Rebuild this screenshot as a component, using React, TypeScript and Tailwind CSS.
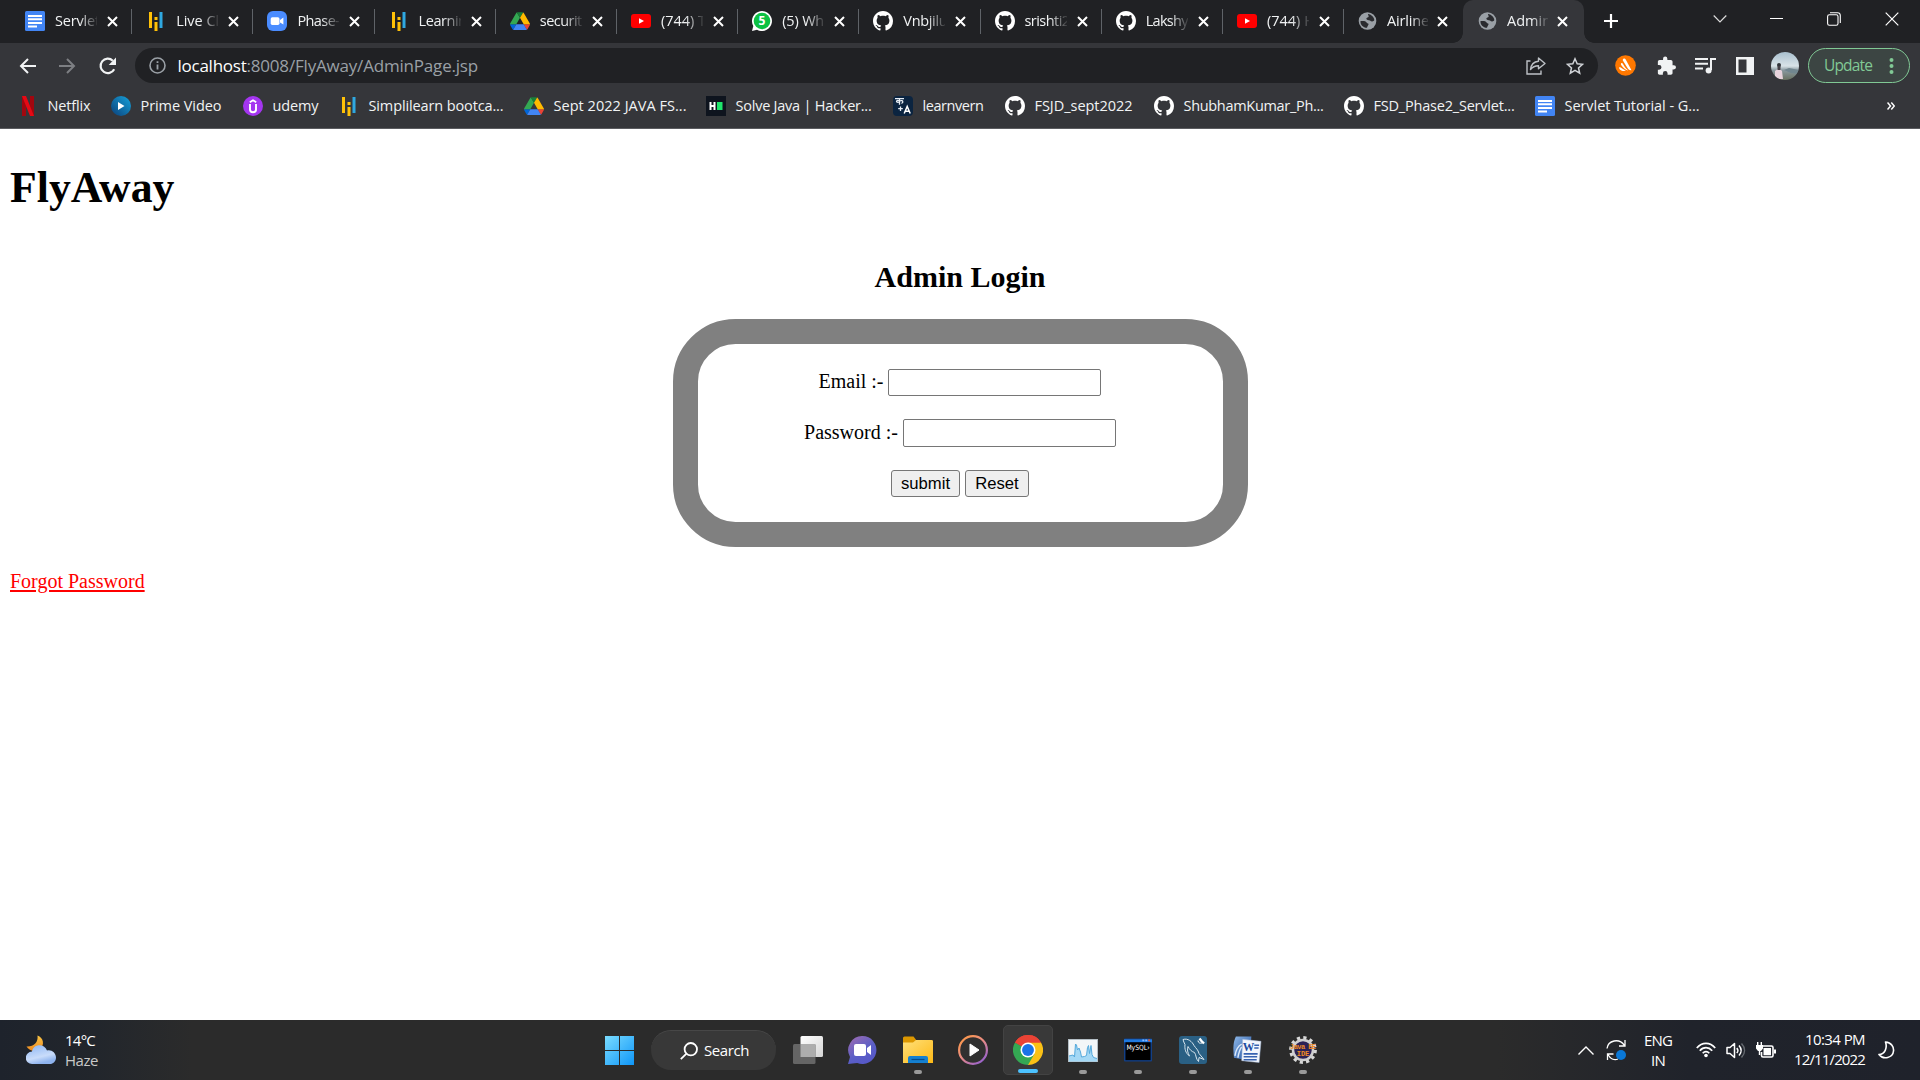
import React, { useLayoutEffect, useRef, useState } from "react";

const ui = "font-['Open_Sans','Noto_Sans',sans-serif]";

/* Text tracked so that it fills the given width. */
function Fit({ text, w, className = "" }: { text: string; w: number; className?: string }) {
  const ref = useRef<HTMLSpanElement>(null);
  const [ls, setLs] = useState(0);
  useLayoutEffect(() => {
    const el = ref.current;
    if (!el) return;
    const natural = el.getBoundingClientRect().width - ls * text.length;
    setLs((w - natural) / text.length);
  }, [text, w]);
  return (
    <span className="inline-block overflow-visible whitespace-nowrap" style={{ width: w }}>
      <span ref={ref} className={`inline-block ${className}`} style={{ letterSpacing: ls }}>{text}</span>
    </span>
  );
}

const Docs = () => (
  <svg width="20" height="20" viewBox="0 0 20 20"><rect width="20" height="20" rx="1.5" fill="#4285f4" /><path d="M3 4h14v2H3zM3 7.3h14v2H3zM3 11h14v2H3zM3 14.5h9v2H3z" fill="#fff" /></svg>
);
const Simpli = () => (
  <svg width="20" height="20" viewBox="0 0 20 20"><path d="M3 1h3v16H3zM8.500 11h3v9h-3zM8.500 6h3v3h-3z" fill="#ffc107" /><path d="M13.500 1h3v16h-3z" fill="#2fa8e0" /></svg>
);
const Zoom = () => (
  <svg width="20" height="20" viewBox="0 0 20 20"><rect width="20" height="20" rx="6" fill="#4a8cff" /><rect x="3.7" y="6.3" width="8.8" height="7.6" rx="1.6" fill="#fff" /><path d="M13 9l3.4-2.4v7L13 11.400z" fill="#fff" /></svg>
);
const Drive = () => (
  <svg width="20" height="20" viewBox="0 0 87.300 87.300"><g transform="translate(0 5)"><path d="M6.600 66.850l3.850 6.650c.8 1.400 1.950 2.500 3.300 3.300L27.500 53H0c0 1.550.4 3.100 1.200 4.500z" fill="#0066da" /><path d="M43.650 25L29.900 1.200c-1.350.8-2.500 1.900-3.300 3.300L1.200 48.500A9 9 0 0 0 0 53h27.500z" fill="#34a853" /><path d="M73.550 76.800c1.350-.8 2.500-1.900 3.300-3.300l9.250-16c.8-1.400 1.200-2.950 1.200-4.500H59.800l5.850 11.500z" fill="#ea4335" /><path d="M43.650 25L57.400 1.200C56.050.4 54.500 0 52.900 0H34.400c-1.600 0-3.150.45-4.500 1.200z" fill="#188038" /><path d="M59.800 53H27.500L13.750 76.800c1.350.8 2.900 1.200 4.500 1.200h50.800c1.600 0 3.150-.45 4.500-1.200z" fill="#4285f4" /><path d="M73.400 26.500L60.700 4.500c-.8-1.400-1.950-2.500-3.300-3.300L43.650 25 59.800 53h27.450c0-1.550-.4-3.100-1.200-4.500z" fill="#ffba00" /></g></svg>
);
const YouTube = () => (
  <svg width="20" height="20" viewBox="0 0 20 20"><rect y="3" width="20" height="14" rx="3" fill="#f00" /><path d="M8 7.200v5.600l5-2.800z" fill="#fff" /></svg>
);
const WhatsApp = () => (
  <svg width="20" height="20" viewBox="0 0 20 20"><path d="M0 20l1.300-5A10 10 0 1 1 5 18.700z" fill="#fff" /><circle cx="10" cy="10" r="8.300" fill="#0cc143" /><text x="10" y="14.300" fontSize="12" fontWeight="700" textAnchor="middle" fill="#fff" fontFamily="Open Sans">5</text></svg>
);
const GitHub = () => (
  <svg width="20" height="20" viewBox="0 0 16 16" fill="#fff"><path d="M8 0C3.580 0 0 3.580 0 8c0 3.540 2.290 6.530 5.470 7.590.4.070.55-.17.55-.38 0-.19-.01-.82-.01-1.490-2.010.37-2.530-.49-2.690-.94-.09-.23-.48-.94-.82-1.130-.28-.15-.68-.52-.01-.53.63-.01 1.080.58 1.230.82.72 1.210 1.870.87 2.330.66.070-.52.28-.87.51-1.070-1.780-.2-3.640-.89-3.640-3.950 0-.87.31-1.590.82-2.150-.08-.2-.36-1.020.08-2.120 0 0 .67-.21 2.200.82.64-.18 1.320-.27 2-.27s1.360.09 2 .27c1.530-1.040 2.200-.82 2.200-.82.44 1.100.16 1.920.08 2.120.51.56.82 1.270.82 2.150 0 3.070-1.870 3.750-3.650 3.950.29.25.54.73.54 1.480 0 1.070-.01 1.930-.01 2.200 0 .21.15.46.55.38A8.010 8.010 0 0 0 16 8c0-4.420-3.580-8-8-8z" /></svg>
);
const Globe = () => (
  <svg width="20" height="20" viewBox="0 0 20 20"><circle cx="9.500" cy="10" r="8.800" fill="#9aa0a6" /><path d="M2.500 10c1 .2 2.700-.2 4.500.2 1.500.4 1.500 2.200 3.500 2.500.2 1.500-1 2-1.500 4.100-4-.1-6.800-3-6.500-6.800zM10 3c3 .3 6 2.800 6.300 6-.8 2-3.300 1.500-4.300.5-1.500-.5-3.500-.2-3.700-2 .2-1 2-.8 2.400-2 .1-1-1-1.300-.7-2.500z" fill="#2a2b2f" /></svg>
);
const Netflix = () => (
  <svg width="20" height="20" viewBox="0 0 20 20"><path d="M4 0h4v20H4zM12 0h4v20h-4z" fill="#a1070f" /><path d="M4 0h4l8 20h-4z" fill="#e50914" /></svg>
);
const Prime = () => (
  <svg width="20" height="20" viewBox="0 0 20 20"><defs><linearGradient id="pv" x1="0" y1="1" x2="1" y2="0"><stop stopColor="#0b3f78" /><stop offset="1" stopColor="#16a3dc" /></linearGradient></defs><circle cx="10" cy="10" r="10" fill="url(#pv)" /><path d="M7 6v8l6.500-4z" fill="#fff" /></svg>
);
const Udemy = () => (
  <svg width="20" height="20" viewBox="0 0 20 20"><circle cx="10" cy="10" r="10" fill="#a435f0" /><path d="M7 8v5.500c0 3.600 6 3.600 6 0V8M6.800 6.200L10 4.300l3.200 1.900" fill="none" stroke="#fff" strokeWidth="1.900" /></svg>
);
const Hacker = () => (
  <svg width="20" height="20" viewBox="0 0 20 20"><rect width="20" height="20" fill="#0e141e" /><path d="M3.500 6h2v3h2V6h2v8h-2v-3h-2v3h-2z" fill="#fff" /><path d="M11 6h5.500v8H11z" fill="#1ee66b" /></svg>
);
const Learnvern = () => (
  <svg width="20" height="20" viewBox="0 0 20 20"><rect width="20" height="20" rx="4" fill="#0b2440" /><path d="M2 2.700h9M6.500 2.700v6M6.500 5c-4-2-4 2.500 0 1M6.500 5c4-1.500 4 1.500 2 2.500M7.500 10.500v4.500M5.200 12.700h4.600" stroke="#e8eef5" strokeWidth="1.300" fill="none" /><path d="M11.200 17.500l3-7 3 7M12.200 15.200h4" stroke="#fff" strokeWidth="1.500" fill="none" /></svg>
);

const tabs: { t: string; w: number; i: React.ReactNode }[] = [
  { t: "Servlet", w: 45, i: <Docs /> },
  { t: "Live Cl", w: 43, i: <Simpli /> },
  { t: "Phase-", w: 42, i: <Zoom /> },
  { t: "Learnin", w: 48, i: <Simpli /> },
  { t: "securit", w: 42, i: <Drive /> },
  { t: "(744) T", w: 45, i: <YouTube /> },
  { t: "(5) Wh", w: 42, i: <WhatsApp /> },
  { t: "Vnbjilu", w: 44, i: <GitHub /> },
  { t: "srishti2", w: 45, i: <GitHub /> },
  { t: "Lakshy", w: 42, i: <GitHub /> },
  { t: "(744) H", w: 48, i: <YouTube /> },
  { t: "Airline", w: 42, i: <Globe /> },
  { t: "Admin", w: 44, i: <Globe /> },
];

const marks: { t: string; w: number; slot: string; i: React.ReactNode }[] = [
  { t: "Netflix", w: 43, slot: "w-[93px]", i: <Netflix /> },
  { t: "Prime Video", w: 81, slot: "w-[132px]", i: <Prime /> },
  { t: "udemy", w: 46, slot: "w-[96px]", i: <Udemy /> },
  { t: "Simplilearn bootca...", w: 135, slot: "w-[185px]", i: <Simpli /> },
  { t: "Sept 2022 JAVA FS...", w: 133, slot: "w-[182px]", i: <Drive /> },
  { t: "Solve Java | Hacker...", w: 136, slot: "w-[187px]", i: <Hacker /> },
  { t: "learnvern", w: 61, slot: "w-[112px]", i: <Learnvern /> },
  { t: "FSJD_sept2022", w: 98, slot: "w-[149px]", i: <GitHub /> },
  { t: "ShubhamKumar_Ph...", w: 140, slot: "w-[190px]", i: <GitHub /> },
  { t: "FSD_Phase2_Servlet...", w: 141, slot: "w-[191px]", i: <GitHub /> },
  { t: "Servlet Tutorial - G...", w: 135, slot: "w-[190px]", i: <Docs /> },
];

function TabStrip() {
  return (
    <div className="flex h-[43px] bg-[#202124] pl-[11px]">
      {tabs.map((tab, k) => {
        const active = k === 12;
        const size = active ? "w-[121px] pl-[15.500px] rounded-t-[10px] bg-[#35363a]" : k === 11 ? "w-[118.500px] pl-[14px]" : "w-[121.200px] pl-[14px]";
        return (
          <div key={k} className={`relative flex h-[43px] shrink-0 items-center ${size}`}>
            {active && (
              <>
                <span className="absolute -left-[10px] bottom-0 size-[10px] bg-[radial-gradient(circle_at_0_0,#202124_9.500px,#35363a_10px)]" />
                <span className="absolute -right-[10px] bottom-0 size-[10px] bg-[radial-gradient(circle_at_100%_0,#202124_9.500px,#35363a_10px)]" />
              </>
            )}
            <span className="shrink-0 pb-px">{tab.i}</span>
            <span className={`h-[26px] overflow-hidden text-[14.500px] leading-[24px] text-[#f1f3f4] [mask-image:linear-gradient(90deg,#000_58%,transparent_105%)] ${k > 10 ? "ml-[9px] w-[41px]" : "ml-[10px] w-[42px]"}`}>
              <Fit text={tab.t} w={tab.w} />
            </span>
            <svg className={`shrink-0 ${k > 10 ? "ml-[9px]" : "ml-[10px]"}`} width="11" height="11" viewBox="0 0 11 11"><path d="M1 1l9 9M10 1l-9 9" stroke="#fff" strokeWidth="2" /></svg>
            {k < 11 && <span className="absolute right-0 top-[9px] h-[25px] w-px bg-[#5f6368]" />}
          </div>
        );
      })}
      <svg className="ml-[19px] mt-[13px]" width="16" height="16" viewBox="0 0 16 16"><path d="M8 1v14M1 8h14" stroke="#fff" strokeWidth="2.200" /></svg>
      <div className="ml-auto flex items-start pr-[21.500px] pt-[12px]">
        <svg className="mr-[43px]" width="14" height="14" viewBox="0 0 14 14" fill="none" stroke="#dcdcdc" strokeWidth="1.200"><path d="M.7 3.500L7 9.800l6.300-6.300" /></svg>
        <svg className="mr-[44px]" width="13" height="14" viewBox="0 0 13 14"><path d="M0 6.500h13" stroke="#fff" /></svg>
        <svg className="mr-[44px]" width="14" height="14" viewBox="0 0 14 14" fill="none" stroke="#fff" strokeWidth="1.100"><rect x=".6" y="2.800" width="10.400" height="10.400" rx="1.800" /><path d="M3 .7h7.500a2.800 2.800 0 0 1 2.800 2.800V11" /></svg>
        <svg width="14" height="14" viewBox="0 0 14 14"><path d="M.7.7l12.600 12.600M13.300.7L.7 13.300" stroke="#fff" strokeWidth="1.200" /></svg>
      </div>
    </div>
  );
}

function Toolbar() {
  return (
    <div className="flex h-[45px] items-center pl-[19px] pr-[9px]">
      <svg className="shrink-0" width="17" height="16" viewBox="0 0 17 16" fill="none" stroke="#f1f3f4" strokeWidth="2"><path d="M17 8H2M9 1L2 8l7 7" /></svg>
      <svg className="ml-[23px] shrink-0" width="17" height="16" viewBox="0 0 17 16" fill="none" stroke="#7d7f83" strokeWidth="2"><path d="M0 8h15M8 1l7 7-7 7" /></svg>
      <svg className="ml-[23px] shrink-0" width="18" height="18" viewBox="0 0 18 18"><path d="M15.200 12.200A7.200 7.200 0 1 1 13.800 3.700" fill="none" stroke="#f1f3f4" strokeWidth="2.200" /><path d="M17 .5V8h-7.300z" fill="#f1f3f4" /></svg>
      <div className="ml-[18px] flex h-[35px] w-[1463px] shrink-0 items-center rounded-full bg-[#202124] pl-[14px] pr-[14px]">
        <svg width="17" height="17" viewBox="0 0 17 17" fill="none" stroke="#9aa0a6"><circle cx="8.500" cy="8.500" r="7.500" strokeWidth="1.600" /><path d="M8.500 7.500v5M8.500 4.300v1.800" strokeWidth="1.800" /></svg>
        <span className="ml-[11.500px] text-[17px] leading-[24px] text-[#9aa0a6]"><Fit text="localhost" w={69} className="text-white" /><Fit text=":8008/FlyAway/AdminPage.jsp" w={231.500} /></span>
        <svg className="ml-auto" width="20" height="18" viewBox="0 0 20 18" fill="none" stroke="#bdc1c6" strokeWidth="1.400"><path d="M4.500 4H1v13h14v-3.500" /><path d="M12.500 1l6.500 5.500-6.500 5.300V8.700C9 8.700 6.500 9.800 4.500 12.500 5 8 8 4.600 12.500 4.200z" strokeLinejoin="round" /></svg>
        <svg className="ml-[20px]" width="18" height="18" viewBox="0 0 18 18" fill="none" stroke="#d0d3d7" strokeWidth="1.500"><path d="M9 1.800l2.200 5 5.300.5-4 3.600 1.200 5.300L9 13.400l-4.700 2.800 1.200-5.300-4-3.600 5.300-.5z" /></svg>
      </div>
      <svg className="ml-[17px] shrink-0" width="21" height="21" viewBox="0 0 21 21"><circle cx="10.500" cy="10.500" r="10.300" fill="#ff7800" /><path d="M8.200 4c1-.8 2-.3 2.500.6l5.800 10.600c-2.200.3-3.300-1-4-2.200L8 5.800c-.4-.8-.3-1.300.2-1.800zM6.200 8.200c.6-.4 1.200-.2 1.700.5 1.300 2.200 2.500 4.600 5.300 6.800-2.200 0-4.600-2.300-6.500-4.700-.8-1-1-2-.5-2.600zM4.700 12c1.800.8 3.800 2.700 6.300 3.600-2 .8-4.400.3-5.900-.9-1-.8-1.300-2.400-.4-2.700z" fill="#fff" /></svg>
      <svg className="ml-[21px] shrink-0" width="19" height="20" viewBox="1 1 22 22"><path d="M20.500 11H19V7c0-1.100-.9-2-2-2h-4V3.500a2.500 2.500 0 0 0-5 0V5H4c-1.100 0-2 .9-2 2v3.800h1.500a2.700 2.700 0 0 1 0 5.400H2V20c0 1.100.9 2 2 2h3.800v-1.500a2.700 2.700 0 0 1 5.400 0V22H17c1.100 0 2-.9 2-2v-4h1.500a2.500 2.500 0 0 0 0-5z" fill="#f1f3f4" /></svg>
      <svg className="ml-[19px] shrink-0" width="21" height="17" viewBox="0 0 21 17"><path d="M0 2h13M0 6.700h13M0 11.400h8M16 1.500V13M15 2h6" stroke="#f1f3f4" strokeWidth="2" /><circle cx="13.600" cy="13.500" r="3" fill="#f1f3f4" /></svg>
      <svg className="ml-[20px] shrink-0" width="18" height="18" viewBox="0 0 18 18"><path d="M0 0h18v18H0zM2.500 2.500v13h8v-13z" fill="#f1f3f4" fillRule="evenodd" /></svg>
      <svg className="ml-[17px] shrink-0" width="28" height="28" viewBox="0 0 28 28"><defs><clipPath id="av"><circle cx="14" cy="14" r="14" /></clipPath><linearGradient id="sky" x1="0" y1="0" x2="0" y2="1"><stop stopColor="#a9c0cf" /><stop offset=".5" stopColor="#d9e3e8" /><stop offset=".65" stopColor="#8a9aa0" /><stop offset="1" stopColor="#68705f" /></linearGradient></defs><g clipPath="url(#av)"><path d="M0 0h28v28H0z" fill="url(#sky)" /><path d="M13 18l5-2 10 2v4l-8-1z" fill="#71868f" /><path d="M4 19l4-3 3 3 1 8H4z" fill="#e8d3dc" /><circle cx="8" cy="13" r="2" fill="#30343a" /><path d="M6.500 14h3v4h-3z" fill="#454047" /></g></svg>
      <div className="ml-[9px] flex h-[35px] w-[102px] shrink-0 items-center rounded-full border-[1.500px] border-[#81c995] bg-[#3c4543] pl-[15px] text-[15.500px] leading-none text-[#81c995]">
        <Fit text="Update" w={48} />
        <svg className="ml-[17px]" width="5" height="18" viewBox="0 0 5 18" fill="#81c995"><circle cx="2.500" cy="3" r="2" /><circle cx="2.500" cy="9" r="2" /><circle cx="2.500" cy="15" r="2" /></svg>
      </div>
    </div>
  );
}

function Bookmarks() {
  return (
    <div className="flex h-[41px] items-center border-b border-[#5b5c60] pb-[4px] pl-[18px] text-[14.500px] leading-[20px] text-[#f1f3f4]">
      {marks.map((m, k) => (
        <div key={k} className={`flex shrink-0 items-center ${m.slot}`}>
          <span className="mr-[9.500px] shrink-0">{m.i}</span>
          <Fit text={m.t} w={m.w} />
        </div>
      ))}
      <svg className="ml-auto mr-[25px]" width="8" height="8" viewBox="0 0 8 8" fill="none" stroke="#fff" strokeWidth="1.500"><path d="M.5.5L3.500 4l-3 3.500M4.300.5l3 3.500-3 3.500" /></svg>
    </div>
  );
}

const Field = ({ label, type, height }: { label: string; type: string; height: string }) => (
  <label className="flex items-center justify-center gap-[5px] leading-[23px]">
    <span className="pb-[2px]">{label}</span>
    <input type={type} className={`w-[213px] rounded-[2px] border border-[#767676] bg-white px-1 text-[16.667px] outline-none ${height}`} />
  </label>
);

function Page() {
  return (
    <main className="flex h-[891px] flex-col bg-white px-[10px] font-['Liberation_Serif','Times_New_Roman',serif] text-[20px] text-black">
      <h1 className="mt-[33px] h-[50px] text-[43.750px] font-bold leading-[50px]">FlyAway</h1>
      <h2 className="mt-[48px] text-center text-[30px] font-bold leading-[34px]">Admin Login</h2>
      <form onSubmit={(e) => e.preventDefault()} className="mx-auto mt-[25px] flex h-[228px] w-[575px] flex-col rounded-[62.500px] border-[25px] border-[#808080] pt-[25px]">
        <Field label="Email :-" type="text" height="h-[27px]" />
        <div className="mt-[23px]"><Field label="Password :-" type="password" height="h-[28px]" /></div>
        <div className="mt-[23px] flex justify-center gap-[5px] font-['Liberation_Sans',Arial,sans-serif] text-[16.667px] leading-[23px]">
          <button className="h-[27px] w-[69px] rounded-[3px] border border-[#767676] bg-[#efefef]">submit</button>
          <button type="reset" className="h-[27px] w-[64px] rounded-[3px] border border-[#767676] bg-[#efefef]">Reset</button>
        </div>
      </form>
      <a className="mt-[23px] self-start leading-[23px] text-[#ff0000] underline decoration-2 underline-offset-2">Forgot Password</a>
    </main>
  );
}

const taskIcons: { i: React.ReactNode; run?: boolean; active?: boolean }[] = [
  { i: <svg width="30" height="28" viewBox="0 0 30 28"><defs><linearGradient id="tv" x2="1" y2="1"><stop stopColor="#fff" /><stop offset="1" stopColor="#d5d5d5" /></linearGradient></defs><rect x="7.500" width="22.500" height="21" rx="1.500" fill="url(#tv)" /><rect y="8" width="22.500" height="20" rx="1.500" fill="#656565" /><path d="M7.500 8h15v13h-15z" fill="#adadad" /></svg> },
  { i: <svg className="mr-px" width="29" height="29" viewBox="0 0 29 29"><defs><linearGradient id="ch" x1="0" y1="0" x2=".7" y2="1"><stop stopColor="#a36caf" /><stop offset=".6" stopColor="#5b5fc7" /><stop offset="1" stopColor="#5658c8" /></linearGradient></defs><path d="M14.500 0a14 14 0 1 1-5.300 27L0 28l2-7A14.100 14.100 0 0 1 14.500 0z" fill="url(#ch)" /><rect x="6" y="8" width="12" height="12" rx="2" fill="#fff" /><path d="M19 12l4-3v10l-4-3z" fill="#fff" /></svg> },
  { run: true, i: <svg width="30" height="28" viewBox="0 0 30 28"><defs><linearGradient id="fo" x2="1" y2="1"><stop stopColor="#ffe07a" /><stop offset="1" stopColor="#fdb916" /></linearGradient></defs><path d="M0 2a1.500 1.500 0 0 1 1.500-1.500h9l3 4H30V14H0z" fill="#dc9700" /><path d="M0 6.500L10 6.500l3-2.500h15.500A1.500 1.500 0 0 1 30 5.500V27H0z" fill="url(#fo)" /><path d="M5 27v-5a2 2 0 0 1 2-2h16a2 2 0 0 1 2 2v5z" fill="#1580d0" /><path d="M8.500 23.500h13" stroke="#064b8b" strokeWidth="1.200" /></svg> },
  { i: <svg width="30" height="30" viewBox="0 0 30 30"><defs><linearGradient id="mp" x1="0" y1="0" x2=".8" y2="1"><stop stopColor="#ff9a3d" /><stop offset=".5" stopColor="#ea8d83" /><stop offset="1" stopColor="#9560cf" /></linearGradient></defs><circle cx="15" cy="15" r="13.900" fill="#303030" stroke="url(#mp)" strokeWidth="2.200" /><path d="M12 9v12L21 15z" fill="#fff" stroke="#fff" strokeLinejoin="round" /></svg> },
  { run: true, active: true, i: <svg width="30" height="30" viewBox="0 0 48 48"><path d="M24 24L3.200 12A24 24 0 0 1 44.800 12z" fill="#ea4335" /><path d="M24 24l20.800-12A24 24 0 0 1 24 48l-3-6z" fill="#fbc116" /><path d="M24 24l10.400 6L24 48A24 24 0 0 1 3.200 12z" fill="#34a853" /><path d="M24 12h20.800L34.400 30z" fill="#fbc116" /><path d="M3.200 12A24 24 0 0 1 44.800 12H24L13.600 18z" fill="#ea4335" /><circle cx="24" cy="24" r="12" fill="#fff" /><circle cx="24" cy="24" r="9.500" fill="#1a73e8" /></svg> },
  { run: true, i: <svg width="30" height="23" viewBox="0 0 30 23"><rect x=".5" y=".5" width="29" height="22" fill="#f3f6f8" stroke="#b4bec5" /><path d="M1 17l4-1 1.500 2L7.500 5l1 1 1 5 1.500-2 1.500 4 1 5 3-.5 2-1 1-8 1-2 1 8 1.500-8 1 9 1.500 3 3.500 1v3H1z" fill="#a4d8f5" /><path d="M1 17l4-1 1.500 2L7.500 5l1 1 1 5 1.500-2 1.500 4 1 5 3-.5 2-1 1-8 1-2 1 8 1.500-8 1 9 1.500 3 3.500 1" fill="none" stroke="#55a9dc" /></svg> },
  { run: true, i: <svg className="mr-px" width="28" height="24" viewBox="0 0 29 24"><rect width="29" height="24" rx="1" fill="#123f86" /><path d="M0 1h29v3H0z" fill="#1f7ae0" /><path d="M1.500 4h26v18.500h-26z" fill="#000" /><path d="M19 1h2v2h-2zM22 1h2v2h-2z" fill="#8bbcff" /><path d="M25 1h2v2h-2z" fill="#e85a30" /><text x="2.500" y="12.500" fontSize="7.500" fontFamily="DejaVu Sans" textLength="24" lengthAdjust="spacingAndGlyphs" fill="#fff">MySQL›</text></svg> },
  { run: true, i: <svg width="28" height="28" viewBox="0 0 28 28"><rect width="28" height="28" rx="3" fill="#2a6084" /><path d="M4 3.500c5-1.500 9 2 11 6 2 3 4 4 5 8l5 6-5-2-.5 4c-3-3-2-6-4-9-3-1-5-3-6.500-6-1 3-.5 6 1.500 9.500-4-3-5-7-4.500-11.500-1-2-1.500-3-2-5z" fill="none" stroke="#d7e5ee" strokeWidth="1" /><path d="M20.500 2.500l2 2.500 2.500 2.500" fill="none" stroke="#fff" strokeWidth="2.400" /><path d="M19 4.500c0 2.500 2 3 4 2.500" fill="none" stroke="#fff" /></svg> },
  { run: true, i: <svg className="mr-px" width="29" height="28" viewBox="0 0 30 28"><defs><linearGradient id="wd" x2="1" y2="1"><stop stopColor="#8eb8e8" /><stop offset="1" stopColor="#1c4c9c" /></linearGradient></defs><path d="M3 0h16l-2 25-16-3C0 12 0 6 3 0z" fill="url(#wd)" /><path d="M2 20C3 14 5 10 9 8M5 22c1-5 2-9 4-11" fill="none" stroke="#dbe8f8" strokeWidth="1.500" /><path d="M10 3l19 2-2 22-18-2z" fill="#f3f6fc" stroke="#9fb6d8" strokeWidth=".5" /><path d="M22 9h5M22 12h4.500M11 18h14.500M11 21h14M11 24h13.500" stroke="#3762b0" strokeWidth="1.600" /><text x="10" y="15.500" fontSize="12" fontWeight="700" fontFamily="Liberation Serif" fill="#1d4ba0">W</text></svg> },
  { run: true, i: <svg width="28" height="28" viewBox="0 0 28 28"><circle cx="14" cy="14" r="12.200" fill="none" stroke="#d8d8d8" strokeWidth="3.400" strokeDasharray="3.190 3.190" /><circle cx="14" cy="14" r="10" fill="#2c2255" stroke="#cfcfcf" strokeWidth="2.500" /><text x="14" y="13" fontSize="7" fontWeight="700" textAnchor="middle" textLength="26" fontFamily="Liberation Mono" fill="#f08a24">Java EE</text><text x="14" y="19.500" fontSize="7" fontWeight="700" textAnchor="middle" fontFamily="Liberation Mono" fill="#f08a24">IDE</text></svg> },
];

function Taskbar() {
  return (
    <footer className="flex h-[60px] bg-[linear-gradient(90deg,#1e232c_0%,#22262c_5%,#2b2b2b_10%,#2b2b2b_78%,#20232b_88%,#1f222b_100%)] text-[15px] leading-[20px] text-white">
      <div className="flex w-[605px] items-center pl-[26px]">
        <svg width="30" height="30" viewBox="0 0 30 30"><defs><linearGradient id="mo" x2="0" y2="1"><stop stopColor="#f9c545" /><stop offset="1" stopColor="#ef8a20" /></linearGradient><linearGradient id="cl" x2=".4" y2="1"><stop stopColor="#8ab4f3" /><stop offset=".7" stopColor="#c9dcfa" /><stop offset="1" stopColor="#8eb3ee" /></linearGradient></defs><path d="M11.500.5c6 2 7.500 9.500 2.500 13.500-4 3.500-11 2-13.500-2.500C7.500 12 12.500 7.500 11.500.5z" fill="url(#mo)" /><path d="M6 29a6.200 6.200 0 0 1 0-12.400C7.500 8 18.500 8.500 21 15.500c4-1.500 9 2 9 7 0 4-3 6.500-6 6.500z" fill="url(#cl)" /></svg>
        <div className="ml-[9px] flex flex-col"><Fit text="14°C" w={30} /><Fit text="Haze" w={33} className="text-[#c9c9c9]" /></div>
      </div>
      <div className="flex items-center">
        <svg width="29" height="29" viewBox="0 0 29 29"><defs><linearGradient id="wn" x2="1" y2="1"><stop stopColor="#7adcff" /><stop offset="1" stopColor="#0f96f8" /></linearGradient></defs><path d="M0 0h14v14H0zM15 0h14v14H15zM0 15h14v14H0zM15 15h14v14H15z" fill="url(#wn)" /></svg>
        <div className="ml-[17px] flex h-10 w-[125px] items-center rounded-full border-t border-[#474747] bg-[#383838] pl-[29px]">
          <svg width="18" height="18" viewBox="0 0 18 18" fill="none" stroke="#fff" strokeWidth="1.800"><circle cx="10.800" cy="7.200" r="6.200" /><path d="M6.200 11.800L.8 17.200" /></svg>
          <span className="ml-[6px] pb-[2px]"><Fit text="Search" w={45} /></span>
        </div>
        <div className="ml-[4.500px] flex">
          {taskIcons.map((t, k) => (
            <div key={k} className="flex h-[60px] w-[55px] items-center justify-center">
              <div className={`relative flex size-[50px] items-center justify-center rounded-[5px] ${t.active ? "border border-[#434343] bg-[#393939]" : ""}`}>
                {t.i}
                {t.run && <span className={`absolute bottom-[1px] h-[4px] rounded-full ${t.active ? "w-5 bg-[#4cc2ff]" : "w-2 bg-[#9a9a9a]"}`} />}
              </div>
            </div>
          ))}
        </div>
      </div>
      <div className="ml-auto flex items-center pr-[25px]">
        <svg width="16" height="9" viewBox="0 0 16 9" fill="none" stroke="#fff" strokeWidth="1.400"><path d="M.5 8.500L8 1l7.500 7.500" /></svg>
        <svg className="ml-[12px]" width="21" height="22" viewBox="0 0 21 22" fill="none" stroke="#fff" strokeWidth="1.300"><path d="M1 9.500C2 1.500 13-1.500 18.500 6.500M19 1v6h-6M12 20C8 21.500 4 19.500 2 15.500M1.500 21v-6h6" /><circle cx="15" cy="16" r="5" fill="#0a78d7" stroke="none" /></svg>
        <div className="ml-[15px] flex w-[32px] flex-col items-center pb-px"><Fit text="ENG" w={28} /><Fit text="IN" w={14} /></div>
        <svg className="ml-[22px]" width="20" height="16" viewBox="0 0 20 16" fill="none" stroke="#fff" strokeWidth="1.700"><path d="M.8 6C6-.3 14-.3 19.200 6M3.800 8.700c3.600-4 8.800-4 12.400 0M6.700 11.300c2-2.200 4.600-2.200 6.600 0" /><circle cx="10" cy="13.500" r="1.800" fill="#fff" stroke="none" /></svg>
        <svg className="ml-[10px]" width="20" height="17" viewBox="0 0 20 17" fill="none" stroke="#fff" strokeWidth="1.500"><path d="M1 5.500h3L8.500 1.500v14L4 11.500H1z" strokeLinejoin="round" /><path d="M10.800 6c1.300 1.500 1.300 3.500 0 5M13 3.500c2.600 3 2.600 7 0 10" /><path d="M15.500 1.500c4 4.300 4 9.700 0 14" stroke="#666a70" /></svg>
        <svg className="ml-[10px]" width="20" height="17" viewBox="0 0 20 17"><path d="M7 4h8.500A1.500 1.500 0 0 1 17 5.500v8a1.500 1.500 0 0 1-1.500 1.500H7a1.500 1.500 0 0 1-1.500-1.500V10" fill="none" stroke="#fff" strokeWidth="1.600" /><path d="M7.500 6h7.500v7.200H7.500zM18 7.500h2v4h-2zM0 3h7v3.500L5 9H4.200v4H2.800V9H2L0 6.500zM1 0h1.400v3H1zM4.600 0H6v3H4.600z" fill="#fff" /></svg>
        <div className="ml-[18px] flex w-[71px] flex-col items-end pb-[2px]"><Fit text="10:34 PM" w={60} /><Fit text="12/11/2022" w={71} /></div>
        <svg className="ml-[13px]" width="17" height="18" viewBox="0 0 17 18" fill="none" stroke="#fff" strokeWidth="1.600"><path d="M7.500 1c6 .5 8.500 5 8 9-.6 6.500-10 9.500-14.500 3.500C7 13 9.500 7 7.500 1z" strokeLinejoin="round" /></svg>
      </div>
    </footer>
  );
}

export default function App() {
  return (
    <div className={`flex h-[1080px] w-[1920px] flex-col overflow-hidden ${ui}`}>
      <header className="flex flex-col bg-[#35363a]">
        <TabStrip />
        <Toolbar />
        <Bookmarks />
      </header>
      <Page />
      <Taskbar />
    </div>
  );
}
